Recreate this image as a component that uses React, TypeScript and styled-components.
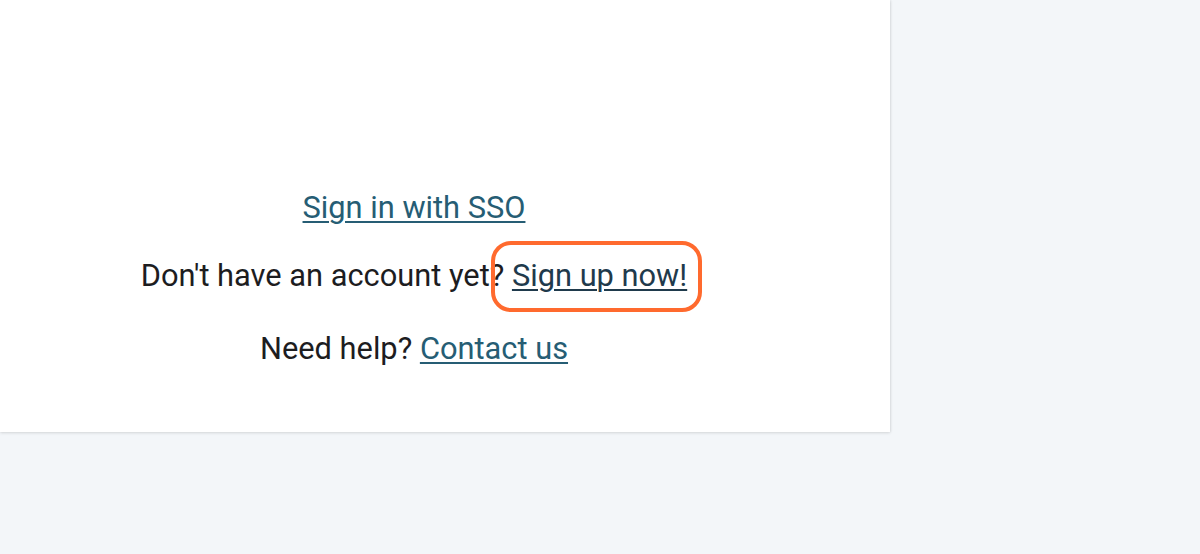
import styled, { createGlobalStyle } from 'styled-components'

const GlobalStyle = createGlobalStyle`
	html, body {
		margin: 0;
		padding: 0;
		background: #f3f6f9;
		font-family: Roboto, 'Liberation Sans', sans-serif;
	}
`

const Page = styled.div`
	width: 1200px;
	height: 554px;
	overflow: hidden;
	background: #f3f6f9;
`

const Card = styled.div`
	width: 890px;
	height: 432px;
	box-sizing: border-box;
	background: #ffffff;
	box-shadow: 0 1px 3px rgba(0, 0, 0, 0.12), 1px 0 2px rgba(0, 0, 0, 0.06);
	display: flex;
	flex-direction: column;
	align-items: center;
	padding: 190px 62px 0 0;
	gap: 34.5px;
`

const Line = styled.p<{ $tight?: boolean }>`
	margin: ${(p) => (p.$tight ? '-3px 0 3px' : '0')};
	font-size: 30.8px;
	line-height: 36px;
	color: #1d1d1f;
	white-space: nowrap;
`

const Link = styled.a<{ $dark?: boolean }>`
	color: ${(p) => (p.$dark ? '#1f3a4c' : '#265d74')};
	text-decoration: underline;
	text-decoration-thickness: 2px;
	text-underline-offset: 3px;
	cursor: pointer;
`

const Highlight = styled.span`
	position: relative;

	&::after {
		content: '';
		position: absolute;
		left: -21px;
		right: -15px;
		top: -16px;
		bottom: -18px;
		border: 4px solid #ff6a2e;
		border-radius: 20px;
		pointer-events: none;
	}
`

const App = () => {
	return (
		<Page>
			<GlobalStyle />
			<Card>
				<Line>
					<Link href="#">Sign in with SSO</Link>
				</Line>
				<Line $tight>
					Don't have an account yet?{' '}
					<Highlight>
						<Link $dark href="#">
							Sign up now!
						</Link>
					</Highlight>
				</Line>
				<Line>
					Need help? <Link href="#">Contact us</Link>
				</Line>
			</Card>
		</Page>
	)
}

export default App
